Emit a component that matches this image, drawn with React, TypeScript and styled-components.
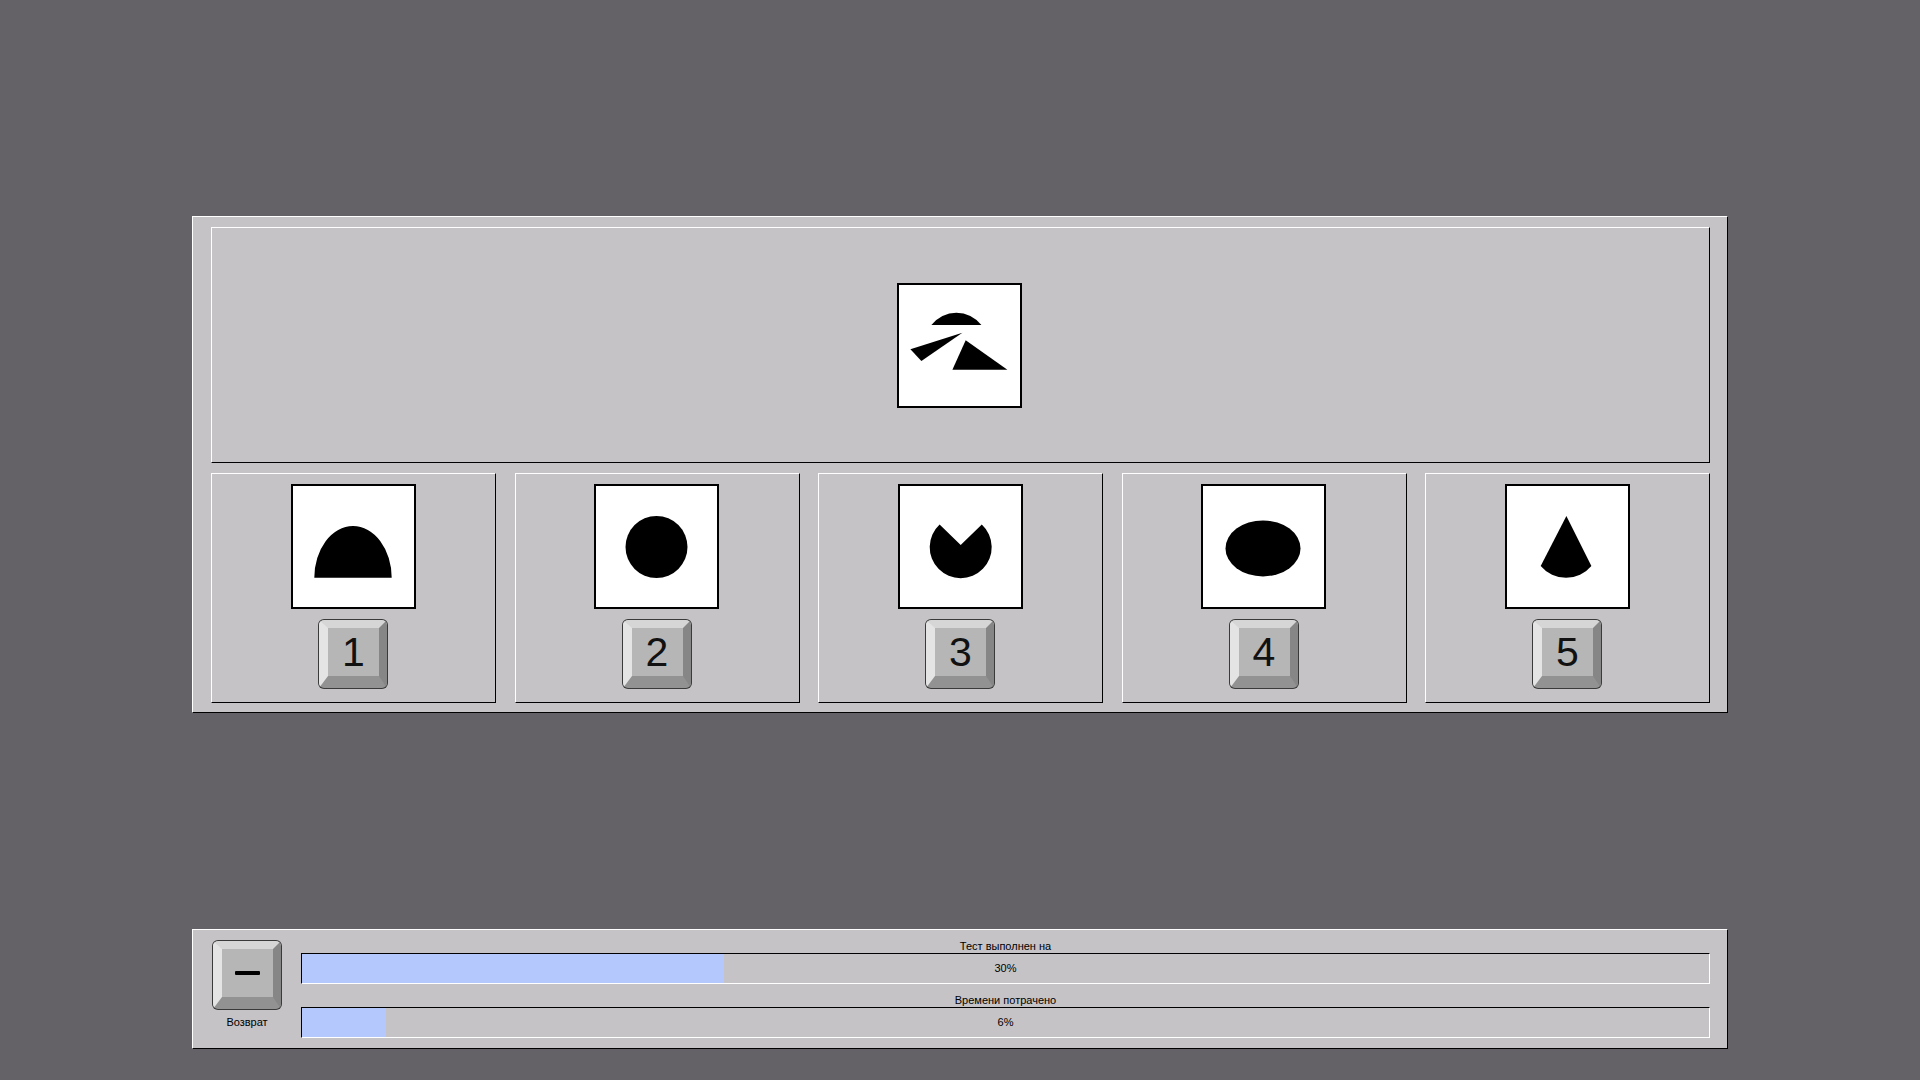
import React from "react";
import styled, { createGlobalStyle } from "styled-components";

const GlobalStyle = createGlobalStyle`
  html, body {
    margin: 0;
    padding: 0;
    background: #646266;
    font-family: "Liberation Sans", Arial, sans-serif;
  }
  body {
    min-height: 100vh;
  }
`;

const Page = styled.div`
  display: flex;
  flex-direction: column;
  gap: 216px;
  padding: 216px 0 0 192px;
`;

const Panel = styled.div`
  box-sizing: border-box;
  width: 1536px;
  background: #c5c3c6;
  border-top: 1px solid #ffffff;
  border-left: 1px solid #ffffff;
  border-right: 1px solid #000000;
  border-bottom: 1px solid #000000;
`;

const TaskPanel = styled(Panel)`
  height: 497px;
  padding: 10px 17px 9px 18px;
  display: flex;
  flex-direction: column;
  gap: 10px;
`;

const Raised = styled.div`
  box-sizing: border-box;
  border-top: 1px solid #ffffff;
  border-left: 1px solid #ffffff;
  border-right: 1px solid #000000;
  border-bottom: 1px solid #000000;
`;

const ProblemBox = styled(Raised)`
  height: 236px;
  display: flex;
  align-items: center;
  justify-content: center;
  padding-right: 2px;
`;

const OptionsRow = styled.div`
  display: flex;
  gap: 18.5px;
  height: 230px;
`;

const OptionCard = styled(Raised)`
  flex: 1;
  display: flex;
  flex-direction: column;
  align-items: center;
  padding-top: 10px;
  padding-right: 1px;
  gap: 10px;
`;

const Picture = styled.div`
  box-sizing: border-box;
  width: 125px;
  height: 125px;
  border: 2px solid #000;
  background: #fff;
  flex-shrink: 0;
  svg {
    display: block;
    width: 121px;
    height: 121px;
  }
`;

const Key = styled.button`
  box-sizing: border-box;
  width: 68px;
  height: 68px;
  margin: 1px;
  padding: 0;
  border-style: solid;
  border-width: 8px 8px 12px 9px;
  border-color: #d6d6d6 #868686 #929292 #e4e4e4;
  border-radius: 5px;
  background: #b6b6b6;
  box-shadow: 0 0 0 1px #3a3a3a;
  display: flex;
  align-items: center;
  justify-content: center;
  font-family: "Liberation Sans", Arial, sans-serif;
  font-size: 41px;
  line-height: 1;
  color: #111;
  cursor: pointer;
  flex-shrink: 0;
`;

const Minus = styled.span`
  display: block;
  width: 25px;
  height: 4px;
  border-radius: 1px;
  background: #000;
`;

const StatusPanel = styled(Panel)`
  height: 120px;
  padding: 0 17px 9px 19px;
  display: flex;
  gap: 19px;
`;

const BackColumn = styled.div`
  width: 70px;
  padding-top: 10px;
  display: flex;
  flex-direction: column;
  align-items: center;
`;

const BackLabel = styled.div`
  margin-top: 6px;
  font-size: 11px;
  line-height: 13px;
  color: #000;
  white-space: nowrap;
`;

const BarsColumn = styled.div`
  flex: 1;
  display: flex;
  flex-direction: column;
`;

const BarCaption = styled.div`
  height: 23px;
  display: flex;
  align-items: flex-end;
  justify-content: center;
  font-size: 11px;
  line-height: 13px;
  color: #000;
`;

const Bar = styled.div<{ $pct: number }>`
  box-sizing: border-box;
  height: 31px;
  border-top: 1px solid #000;
  border-left: 1px solid #000;
  border-bottom: 1px solid #fff;
  border-right: 1px solid #fff;
  background: linear-gradient(
    to right,
    #b4c8fd 0,
    #b4c8fd ${(p) => p.$pct}%,
    transparent ${(p) => p.$pct}%
  );
  display: flex;
  align-items: center;
  justify-content: center;
  font-size: 11px;
  line-height: 13px;
  color: #000;
`;

const shapes: React.ReactNode[] = [
  <path key="1" d="M21.3 91.7 A38.7 51.7 0 0 1 98.7 91.7 Z" fill="#000" />,
  <circle key="2" cx="60.5" cy="61" r="31" fill="#000" />,
  <path
    key="3"
    d="M60.7 59 L81.8 38.5 A31 31 0 1 1 39.6 38.5 Z"
    fill="#000"
  />,
  <ellipse key="4" cx="60" cy="62.4" rx="37.5" ry="28" fill="#000" />,
  <path key="5" d="M59.4 30 L84.4 80 A33 33 0 0 1 33.7 80 Z" fill="#000" />,
];

const progress = [
  { caption: "Тест выполнен на", pct: 30 },
  { caption: "Времени потрачено", pct: 6 },
];

export default function App() {
  return (
    <>
      <GlobalStyle />
      <Page>
        <TaskPanel>
          <ProblemBox>
            <Picture>
              <svg viewBox="0 0 121 121">
                <path d="M32.4 40 A31.5 31.5 0 0 1 82.4 40 Z" fill="#000" />
                <polygon points="11.4,64.3 63.4,47.7 22.4,76" fill="#000" />
                <polygon points="66.7,55.3 53.4,84.7 108.4,84.7" fill="#000" />
              </svg>
            </Picture>
          </ProblemBox>
          <OptionsRow>
            {shapes.map((shape, i) => (
              <OptionCard key={i}>
                <Picture>
                  <svg viewBox="0 0 121 121">{shape}</svg>
                </Picture>
                <Key>{i + 1}</Key>
              </OptionCard>
            ))}
          </OptionsRow>
        </TaskPanel>
        <StatusPanel>
          <BackColumn>
            <Key>
              <Minus />
            </Key>
            <BackLabel>Возврат</BackLabel>
          </BackColumn>
          <BarsColumn>
            {progress.map((p) => (
              <React.Fragment key={p.caption}>
                <BarCaption>{p.caption}</BarCaption>
                <Bar $pct={p.pct}>{p.pct}%</Bar>
              </React.Fragment>
            ))}
          </BarsColumn>
        </StatusPanel>
      </Page>
    </>
  );
}
